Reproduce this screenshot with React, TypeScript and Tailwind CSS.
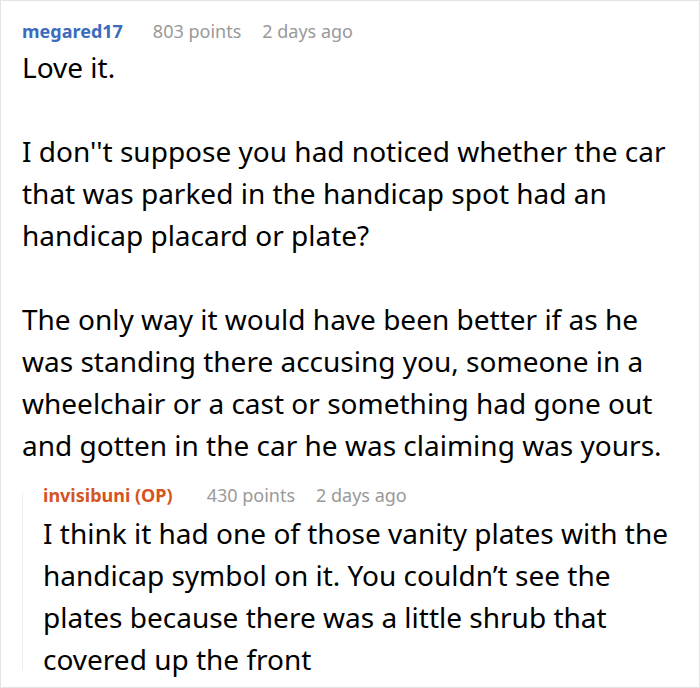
const font = { fontFamily: '"Noto Sans", "Open Sans", sans-serif' };

function Meta({
  name,
  color,
  points,
  ago,
  gap,
}: {
  name: string;
  color: string;
  points: string;
  ago: string;
  gap: string;
}) {
  return (
    <div className="flex h-[22px] items-center text-[18px] leading-[22px]">
      <span className={`font-bold ${color}`}>{name}</span>
      <span className={`${gap} text-[#999999]`}>{points}</span>
      <span className="ml-[21px] text-[#999999]">{ago}</span>
    </div>
  );
}

export default function App() {
  return (
    <div
      className="h-[688px] w-[700px] overflow-hidden border border-[#e4e4e4] bg-white pl-[21px] pr-[21px] pt-[19px] text-black"
      style={font}
    >
      <Meta name="megared17" color="text-[#3b6bbd]" points="803 points" ago="2 days ago" gap="ml-[30px]" />
      <div className="mt-[4px] text-[28px] leading-[42px]">
        <p>Love it.</p>
        <p className="mt-[42px]">
          I don''t suppose you had noticed whether the car that was parked in the handicap spot had an handicap
          placard or plate?
        </p>
        <p className="mt-[42px]">
          The only way it would have been better if as he was standing there accusing you, someone in a wheelchair
          or a cast or something had gone out and gotten in the car he was claiming was yours.
        </p>
      </div>

      <div className="mt-[27px] flex flex-col border-l border-[#ececec] pl-[20px]">
        <div className="-mt-[9px]">
          <Meta
            name="invisibuni (OP)"
            color="text-[#d5541f]"
            points="430 points"
            ago="2 days ago"
            gap="ml-[34px]"
          />
        </div>
        <p className="-mb-[10px] mt-[6px] text-[28px] leading-[42px]">
          I think it had one of those vanity plates with the handicap symbol on it. You couldn’t see the plates
          because there was a little shrub that covered up the front
        </p>
      </div>
    </div>
  );
}
